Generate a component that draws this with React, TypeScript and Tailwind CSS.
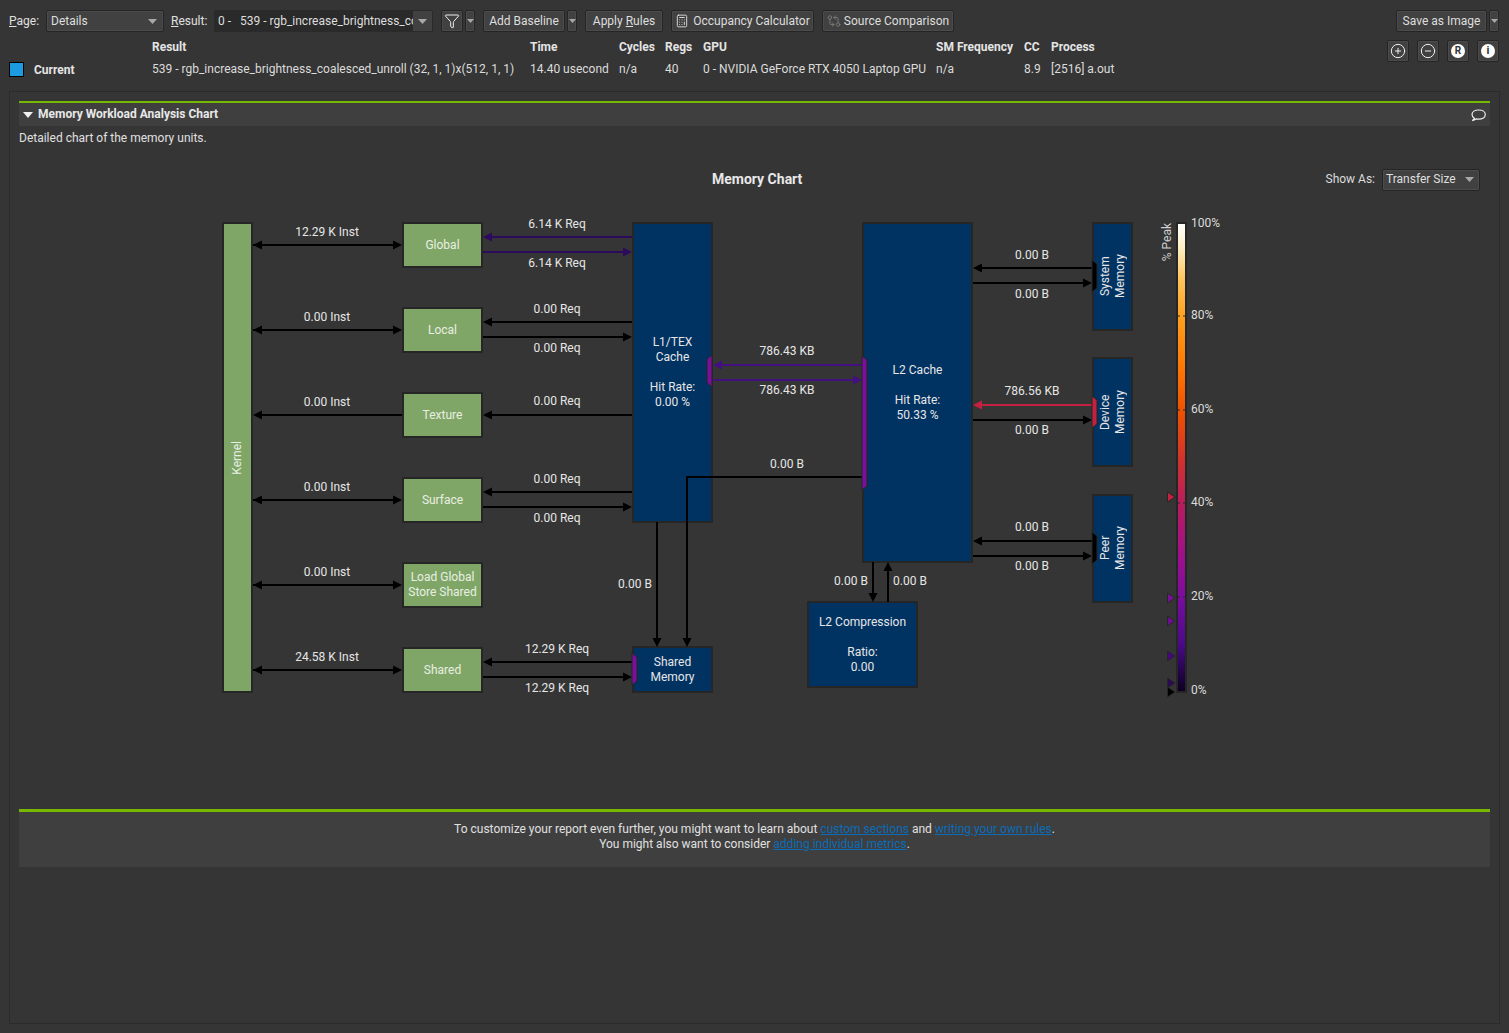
import React from "react";
import { Calculator, CircleMinus, CirclePlus, Filter, GitCompareArrows } from "lucide-react";

const btn = "h-[22px] flex items-center rounded-[2px] border border-[#252525] bg-[#414141] shadow-[inset_0_0_0_1px_#4b4b4b] text-[#dedede] shrink-0";

function Caret({ color = "#a8a8a8" }: { color?: string }) {
  return (
    <svg width="9" height="5" viewBox="0 0 9 5" className="shrink-0">
      <polygon points="0,0 9,0 4.5,5" fill={color} />
    </svg>
  );
}

function MiniDrop({ className = "" }: { className?: string }) {
  return (
    <div className={`${btn} w-[10px] justify-center ${className}`}>
      <svg width="7" height="4" viewBox="0 0 7 4"><polygon points="0,0 7,0 3.5,4" fill="#a8a8a8" /></svg>
    </div>
  );
}

type ArrowProps = { x1: number; y1: number; x2: number; y2: number; c?: string; both?: boolean };

function head(x: number, y: number, dx: number, dy: number, c: string) {
  const l = 9;
  const w = 4.5;
  const bx = x - dx * l;
  const by = y - dy * l;
  const pts = `${x},${y} ${bx - dy * w},${by - dx * w} ${bx + dy * w},${by + dx * w}`;
  return <polygon points={pts} fill={c} />;
}

function Arrow({ x1, y1, x2, y2, c = "#000000", both }: ArrowProps) {
  const len = Math.hypot(x2 - x1, y2 - y1);
  const dx = (x2 - x1) / len;
  const dy = (y2 - y1) / len;
  return (
    <g>
      <line x1={x1} y1={y1} x2={x2 - dx * 4} y2={y2 - dy * 4} stroke={c} strokeWidth="2" />
      {head(x2, y2, dx, dy, c)}
      {both && head(x1, y1, -dx, -dy, c)}
    </g>
  );
}

function Bracket({ x, y1, y2, side, c }: { x: number; y1: number; y2: number; side: "l" | "r"; c: string }) {
  const inner = side === "l" ? x + 5 : x - 5;
  return (
    <polygon
      points={`${x},${y1} ${inner},${y1 + 4} ${inner},${y2 - 4} ${x},${y2}`}
      fill={c}
      stroke="#262626"
      strokeWidth="1"
    />
  );
}

function Marker({ y, c }: { y: number; c: string }) {
  return <polygon points={`1167.5,${y - 5} 1175,${y} 1167.5,${y + 5}`} fill={c} stroke="#262626" strokeWidth="1" />;
}

const label = "absolute -translate-x-1/2 h-[15px] leading-[15px] whitespace-nowrap text-[#e6e6e6]";
const green = "absolute box-border border-2 border-[#262626] bg-[#80a667] text-[#e8efe2] flex items-center justify-center text-center leading-[15px] left-[383px] w-[81px] h-[46px]";
const blue = "absolute box-border border-2 border-[#262626] bg-[#003262] text-[#e6e6e6] flex items-center justify-center text-center leading-[15px]";
const scale = "absolute left-[1172px] h-[15px] leading-[15px] text-[#dcdcdc]";

function Chart() {
  return (
    <div className="relative h-[619px] shrink-0">
      <div className="absolute box-border border-2 border-[#262626] bg-[#80a667] text-[#e8efe2] flex items-center justify-center left-[203px] top-[32px] w-[31px] h-[471px]">
        <span className="[writing-mode:vertical-rl] rotate-180">Kernel</span>
      </div>
      <div className={`${green} top-[32px]`}>Global</div>
      <div className={`${green} top-[117px]`}>Local</div>
      <div className={`${green} top-[202px]`}>Texture</div>
      <div className={`${green} top-[287px]`}>Surface</div>
      <div className={`${green} top-[372px]`}>Load Global<br />Store Shared</div>
      <div className={`${green} top-[457px]`}>Shared</div>

      <div className={`${blue} left-[613px] top-[32px] w-[81px] h-[301px]`}>L1/TEX<br />Cache<br /><br />Hit Rate:<br />0.00 %</div>
      <div className={`${blue} left-[613px] top-[456px] w-[81px] h-[47px]`}>Shared<br />Memory</div>
      <div className={`${blue} left-[843px] top-[32px] w-[111px] h-[341px]`}>L2 Cache<br /><br />Hit Rate:<br />50.33 %</div>
      <div className={`${blue} left-[788px] top-[411px] w-[111px] h-[87px]`}>L2 Compression<br /><br />Ratio:<br />0.00</div>
      <div className={`${blue} left-[1073px] top-[32px] w-[41px] h-[109px]`}>
        <span className="[writing-mode:vertical-rl] rotate-180">System<br />Memory</span>
      </div>
      <div className={`${blue} left-[1073px] top-[167px] w-[41px] h-[110px]`}>
        <span className="[writing-mode:vertical-rl] rotate-180">Device<br />Memory</span>
      </div>
      <div className={`${blue} left-[1073px] top-[304px] w-[41px] h-[109px]`}>
        <span className="[writing-mode:vertical-rl] rotate-180">Peer<br />Memory</span>
      </div>

      <div className="absolute box-border border-2 border-[#262626] left-[1157px] top-[32px] w-[11px] h-[471px] bg-[linear-gradient(to_bottom,#ffffff_0%,#ffefc4_5%,#ffc35a_12%,#ff9f1e_20%,#ff7a05_30%,#ee5200_40%,#d2342a_50%,#b81c5e_60%,#9c0f8e_72%,#7a0c9e_80%,#4a0a88_90%,#0c0020_100%)]" />

      <svg className="absolute left-0 top-0 w-[1471px] h-[619px] pointer-events-none" viewBox="19 190 1471 619">
        <Arrow x1={253} y1={245} x2={402} y2={245} both />
        <Arrow x1={253} y1={330} x2={402} y2={330} both />
        <Arrow x1={402} y1={415} x2={253} y2={415} />
        <Arrow x1={253} y1={500} x2={402} y2={500} both />
        <Arrow x1={253} y1={585} x2={402} y2={585} both />
        <Arrow x1={253} y1={670} x2={402} y2={670} both />

        <Arrow x1={632} y1={237} x2={483} y2={237} c="#2c0a5e" />
        <Arrow x1={483} y1={252} x2={632} y2={252} c="#2c0a5e" />
        <Arrow x1={632} y1={322} x2={483} y2={322} />
        <Arrow x1={483} y1={337} x2={632} y2={337} />
        <Arrow x1={632} y1={415} x2={483} y2={415} />
        <Arrow x1={632} y1={492} x2={483} y2={492} />
        <Arrow x1={483} y1={507} x2={632} y2={507} />
        <Arrow x1={632} y1={662} x2={483} y2={662} />
        <Arrow x1={483} y1={677} x2={632} y2={677} />

        <Arrow x1={862} y1={365} x2={713} y2={365} c="#43107f" />
        <Arrow x1={713} y1={380} x2={862} y2={380} c="#43107f" />

        <polyline points="862,477 687,477 687,640" fill="none" stroke="#000000" strokeWidth="2" />
        <Arrow x1={687} y1={600} x2={687} y2={647} />
        <Arrow x1={657} y1={522} x2={657} y2={647} />
        <Arrow x1={873} y1={562} x2={873} y2={602} />
        <Arrow x1={888} y1={602} x2={888} y2={562} />

        <Arrow x1={1092} y1={268} x2={973} y2={268} />
        <Arrow x1={973} y1={283} x2={1092} y2={283} />
        <Arrow x1={1092} y1={405} x2={973} y2={405} c="#c4203f" />
        <Arrow x1={973} y1={420} x2={1092} y2={420} />
        <Arrow x1={1092} y1={541} x2={973} y2={541} />
        <Arrow x1={973} y1={556} x2={1092} y2={556} />

        <Bracket x={712} y1={355} y2={387} side="r" c="#7a0f9a" />
        <Bracket x={862} y1={356} y2={490} side="l" c="#7a0f9a" />
        <Bracket x={632} y1={653} y2={685} side="l" c="#7a0f9a" />
        <Bracket x={1092} y1={260} y2={292} side="l" c="#000000" />
        <Bracket x={1092} y1={396} y2={428} side="l" c="#c4203f" />
        <Bracket x={1092} y1={532} y2={564} side="l" c="#000000" />

        <g stroke="#262626" strokeWidth="1">
          <line x1="1177" y1="316" x2="1180" y2="316" />
          <line x1="1183" y1="316" x2="1186" y2="316" />
          <line x1="1177" y1="410" x2="1180" y2="410" />
          <line x1="1183" y1="410" x2="1186" y2="410" />
          <line x1="1177" y1="503" x2="1180" y2="503" />
          <line x1="1183" y1="503" x2="1186" y2="503" />
          <line x1="1177" y1="597" x2="1180" y2="597" />
          <line x1="1183" y1="597" x2="1186" y2="597" />
        </g>
        <Marker y={497} c="#c4203f" />
        <Marker y={598} c="#7a0f9a" />
        <Marker y={621} c="#6a0f90" />
        <Marker y={656} c="#47087f" />
        <Marker y={683} c="#2a0a55" />
        <Marker y={692} c="#000000" />
      </svg>

      <div className={`${label} left-[308px] top-[35px]`}>12.29 K Inst</div>
      <div className={`${label} left-[308px] top-[120px]`}>0.00 Inst</div>
      <div className={`${label} left-[308px] top-[205px]`}>0.00 Inst</div>
      <div className={`${label} left-[308px] top-[290px]`}>0.00 Inst</div>
      <div className={`${label} left-[308px] top-[375px]`}>0.00 Inst</div>
      <div className={`${label} left-[308px] top-[460px]`}>24.58 K Inst</div>

      <div className={`${label} left-[538px] top-[27px]`}>6.14 K Req</div>
      <div className={`${label} left-[538px] top-[66px]`}>6.14 K Req</div>
      <div className={`${label} left-[538px] top-[112px]`}>0.00 Req</div>
      <div className={`${label} left-[538px] top-[151px]`}>0.00 Req</div>
      <div className={`${label} left-[538px] top-[204px]`}>0.00 Req</div>
      <div className={`${label} left-[538px] top-[282px]`}>0.00 Req</div>
      <div className={`${label} left-[538px] top-[321px]`}>0.00 Req</div>
      <div className={`${label} left-[538px] top-[452px]`}>12.29 K Req</div>
      <div className={`${label} left-[538px] top-[491px]`}>12.29 K Req</div>

      <div className={`${label} left-[768px] top-[154px]`}>786.43 KB</div>
      <div className={`${label} left-[768px] top-[193px]`}>786.43 KB</div>
      <div className={`${label} left-[768px] top-[267px]`}>0.00 B</div>
      <div className={`${label} left-[616px] top-[387px]`}>0.00 B</div>
      <div className={`${label} left-[832px] top-[384px]`}>0.00 B</div>
      <div className={`${label} left-[891px] top-[384px]`}>0.00 B</div>

      <div className={`${label} left-[1013px] top-[58px]`}>0.00 B</div>
      <div className={`${label} left-[1013px] top-[97px]`}>0.00 B</div>
      <div className={`${label} left-[1013px] top-[194px]`}>786.56 KB</div>
      <div className={`${label} left-[1013px] top-[233px]`}>0.00 B</div>
      <div className={`${label} left-[1013px] top-[330px]`}>0.00 B</div>
      <div className={`${label} left-[1013px] top-[369px]`}>0.00 B</div>

      <div className="absolute left-[1141px] top-[33px] text-[#cfcfcf] [writing-mode:vertical-rl] rotate-180 leading-[15px]">% Peak</div>
      <div className={`${scale} top-[26px]`}>100%</div>
      <div className={`${scale} top-[118px]`}>80%</div>
      <div className={`${scale} top-[212px]`}>60%</div>
      <div className={`${scale} top-[305px]`}>40%</div>
      <div className={`${scale} top-[399px]`}>20%</div>
      <div className={`${scale} top-[493px]`}>0%</div>
    </div>
  );
}

export default function App() {
  const hd = "font-bold text-[#e4e4e4] whitespace-nowrap";
  const val = "text-[#dcdcdc] whitespace-nowrap";
  return (
    <div className="w-[1509px] h-[1033px] flex flex-col overflow-hidden bg-[#353535] text-[12px] leading-[15px] text-[#e0e0e0] font-['Roboto',sans-serif]">
      {/* toolbar */}
      <div className="flex items-center pt-[10px] pl-[9px] pr-[10px] shrink-0">
        <span className="w-[37px]"><u>P</u>age:</span>
        <div className={`${btn} w-[118px] pl-[4px] pr-[6px] justify-between`}>
          <span>Details</span>
          <Caret />
        </div>
        <span className="ml-[7px] w-[43px]"><u>R</u>esult:</span>
        <div className="h-[22px] w-[219px] flex items-stretch rounded-[2px] border border-[#2a2a2a] bg-[#2a2a2a] shrink-0 overflow-hidden">
          <span className="w-[198px] overflow-hidden whitespace-pre pl-[3px] leading-[20px] text-[#dedede]">0 -   539 - rgb_increase_brightness_coalesced_unroll</span>
          <div className="flex-1 flex items-center justify-center bg-[#414141]"><Caret /></div>
        </div>
        <div className={`${btn} ml-[8px] w-[22px] justify-center`}>
          <Filter size={16} strokeWidth={1.5} color="#f0f0f0" />
        </div>
        <MiniDrop className="ml-[2px]" />
        <div className={`${btn} ml-[8px] w-[82px] justify-center`}>Add Baseline</div>
        <MiniDrop className="ml-[2px]" />
        <div className={`${btn} ml-[8px] w-[78px] justify-center`}>Apply&nbsp;<u>R</u>ules</div>
        <div className={`${btn} ml-[8px] w-[143px] justify-center gap-[4px]`}>
          <Calculator size={14} strokeWidth={1.5} color="#e6e6e6" />
          <span>Occupancy Calculator</span>
        </div>
        <div className={`${btn} ml-[8px] w-[132px] justify-center gap-[3px] text-[#7d7d7d]`}>
          <GitCompareArrows size={14} strokeWidth={1.5} color="#7d7d7d" />
          <span>Source Comparison</span>
        </div>
        <div className={`${btn} ml-auto w-[91px] justify-center`}>Save as Image</div>
        <MiniDrop className="ml-[2px]" />
      </div>

      {/* result header */}
      <div className="flex h-[59px] shrink-0 pl-[9px] pr-[10px] pt-[8px]">
        <div className="grid grid-cols-[143px_378px_89px_46px_38px_233px_88px_27px_auto] grid-rows-[15px_15px] gap-y-[7px]">
          <div />
          <div className={hd}>Result</div>
          <div className={hd}>Time</div>
          <div className={hd}>Cycles</div>
          <div className={hd}>Regs</div>
          <div className={hd}>GPU</div>
          <div className={hd}>SM Frequency</div>
          <div className={hd}>CC</div>
          <div className={hd}>Process</div>
          <div className="flex items-center gap-[10px]">
            <div className="w-[15px] h-[15px] border border-black bg-[#1c9be0]" />
            <span className="font-bold text-[#e4e4e4] relative top-[1px]">Current</span>
          </div>
          <div className={val}>539 - rgb_increase_brightness_coalesced_unroll (32, 1, 1)x(512, 1, 1)</div>
          <div className={val}>14.40 usecond</div>
          <div className={val}>n/a</div>
          <div className={val}>40</div>
          <div className={val}>0 - NVIDIA GeForce RTX 4050 Laptop GPU</div>
          <div className={val}>n/a</div>
          <div className={val}>8.9</div>
          <div className={val}>[2516] a.out</div>
        </div>
        <div className="ml-auto flex gap-[8px]">
          <div className={`${btn} w-[22px] justify-center`}><CirclePlus size={16} strokeWidth={1.5} color="#f0f0f0" /></div>
          <div className={`${btn} w-[22px] justify-center`}><CircleMinus size={16} strokeWidth={1.5} color="#f0f0f0" /></div>
          <div className={`${btn} w-[22px] justify-center`}>
            <div className="w-[14px] h-[14px] rounded-full bg-white text-[#333333] font-bold text-[10px] leading-[14px] text-center">R</div>
          </div>
          <div className={`${btn} w-[22px] justify-center`}>
            <div className="w-[14px] h-[14px] rounded-full bg-white text-[#333333] font-bold text-[11px] leading-[14px] text-center">i</div>
          </div>
        </div>
      </div>

      {/* panel */}
      <div className="mx-[9px] mb-[9px] flex-1 box-border border border-[#2b2b2b] pt-[9px] px-[9px] flex flex-col">
        <div className="h-[25px] shrink-0 box-border border-t-2 border-[#76b900] bg-[#3f3f3f] flex items-center pl-[4px] pr-[4px]">
          <svg width="10" height="6" viewBox="0 0 10 6" className="shrink-0"><polygon points="0,0 10,0 5,6" fill="#f0f0f0" /></svg>
          <span className="ml-[5px] font-bold text-[#e8e8e8]">Memory Workload Analysis Chart</span>
          <svg width="15" height="14" viewBox="0 0 15 14" className="ml-auto" fill="none" stroke="#f0f0f0" strokeWidth="1.2">
            <path d="M3.4 10.2C1.8 9.3 1 8 1 6.6 1 3.9 3.9 2 7.7 2s6.6 1.9 6.6 4.6-2.9 4.6-6.6 4.6c-.8 0-1.6-.1-2.3-.3L1.4 12.6z" />
          </svg>
        </div>
        <div className="mt-[5px] h-[15px] shrink-0 text-[#e0e0e0]">Detailed chart of the memory units.</div>
        <div className="mt-[23px] h-[21px] shrink-0 flex items-center">
          <span className="ml-[693px] text-[14px] font-bold text-[#e8e8e8]">Memory Chart</span>
          <span className="ml-auto text-[#dcdcdc]">Show As:</span>
          <div className={`${btn} ml-[7px] mr-[10px] w-[98px] pl-[3px] pr-[5px] justify-between`}>
            <span>Transfer Size</span>
            <Caret />
          </div>
        </div>
        <Chart />
        <div className="h-[58px] shrink-0 box-border border-t-[3px] border-[#76b900] bg-[#3f3f3f] pt-[10px] text-center text-[#e0e0e0]">
          <div>To customize your report even further, you might want to learn about <a className="underline text-[#0a6cb8]">custom sections</a> and <a className="underline text-[#0a6cb8]">writing your own rules</a>.</div>
          <div>You might also want to consider <a className="underline text-[#0a6cb8]">adding individual metrics</a>.</div>
        </div>
      </div>
    </div>
  );
}
